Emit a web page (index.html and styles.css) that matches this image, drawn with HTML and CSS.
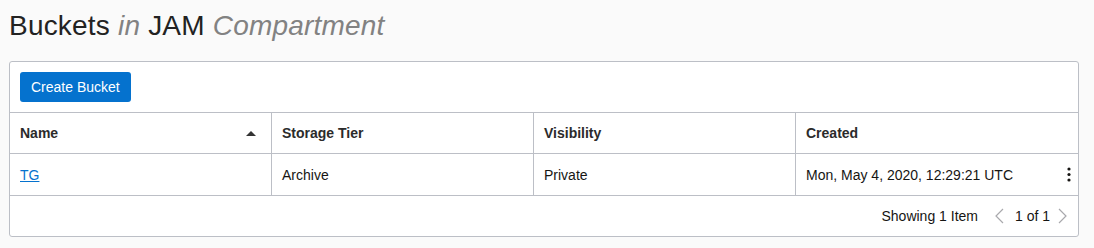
FILE: index.html
```html
<!DOCTYPE html>
<html lang="en">
<head>
<meta charset="utf-8">
<title>Buckets</title>
<link rel="stylesheet" href="styles.css">
</head>
<body>
<div class="page">
  <h1 class="title">Buckets <em class="muted">in</em> JAM <em class="muted">Compartment</em></h1>
  <div class="card">
    <div class="toolbar">
      <button class="btn-primary" type="button">Create Bucket</button>
    </div>
    <div class="grid">
      <div class="cell head sortable">
        <span>Name</span>
        <svg class="sort" width="10" height="5" viewBox="0 0 10 5"><polygon points="0,5 5,0 10,5" fill="#333"/></svg>
      </div>
      <div class="cell head">Storage Tier</div>
      <div class="cell head">Visibility</div>
      <div class="cell head last">Created</div>

      <div class="cell body"><a class="link" href="#">TG</a></div>
      <div class="cell body">Archive</div>
      <div class="cell body">Private</div>
      <div class="cell body last">
        <span>Mon, May 4, 2020, 12:29:21 UTC</span>
        <svg class="kebab" width="4" height="15" viewBox="0 0 4 15"><circle cx="2" cy="2" r="1.6" fill="#161513"/><circle cx="2" cy="7.5" r="1.6" fill="#161513"/><circle cx="2" cy="13" r="1.6" fill="#161513"/></svg>
      </div>
    </div>
    <div class="footer">
      <span class="count">Showing 1 Item</span>
      <svg class="chev" width="9" height="16" viewBox="0 0 9 16"><polyline points="8,1 1,8 8,15" fill="none" stroke="#a9a9ad" stroke-width="1.2"/></svg>
      <span class="pages">1 of 1</span>
      <svg class="chev" width="9" height="16" viewBox="0 0 9 16"><polyline points="1,1 8,8 1,15" fill="none" stroke="#a9a9ad" stroke-width="1.2"/></svg>
    </div>
  </div>
</div>
</body>
</html>
```
FILE: styles.css
```css
html, body {
  margin: 0;
  padding: 0;
  background: #fafafa;
}
body {
  font-family: "Liberation Sans", Arial, sans-serif;
  color: #161513;
  font-size: 14px;
}
.page {
  padding: 10px 15px 0 9px;
}
.title {
  margin: 0 0 19px 0;
  font-size: 28px;
  line-height: 32px;
  font-weight: normal;
  letter-spacing: 0.2px;
  color: #222;
}
.title .muted {
  color: #828282;
  font-style: italic;
}
.card {
  background: #fff;
  border: 1px solid #bcbfc6;
  border-radius: 3px;
}
.toolbar {
  padding: 10px;
  display: flex;
}
.btn-primary {
  height: 30px;
  padding: 0 11px;
  border: none;
  border-radius: 3px;
  background: #0572ce;
  color: #fff;
  font-family: inherit;
  font-size: 14px;
}
.grid {
  display: grid;
  grid-template-columns: 262px 262px 262px 1fr;
  border-top: 1px solid #bcbfc6;
}
.cell {
  box-sizing: border-box;
  display: flex;
  align-items: center;
  justify-content: space-between;
  padding: 0 10px;
  border-right: 1px solid #bcbfc6;
  border-bottom: 1px solid #bcbfc6;
}
.cell.last {
  border-right: none;
  padding-right: 7px;
}
.head {
  height: 41px;
  font-weight: bold;
  color: #2b2b2b;
}
.sortable {
  padding-right: 15px;
}
.body {
  height: 42px;
}
.link {
  color: #0572ce;
  text-decoration: underline;
}
.footer {
  height: 40px;
  display: flex;
  align-items: center;
  justify-content: flex-end;
  padding-right: 11px;
}
.count {
  margin-right: 17px;
}
.pages {
  margin: 0 8px 0 11px;
}
```
